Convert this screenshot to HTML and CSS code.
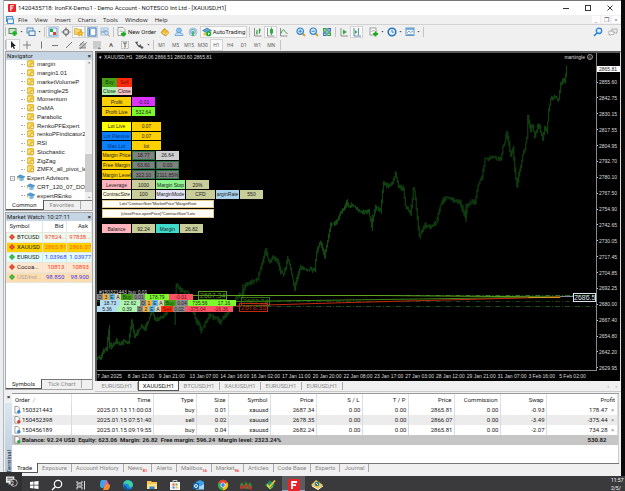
FILE: index.html
```html
<!DOCTYPE html>
<html lang="en">
<head>
<meta charset="utf-8">
<title>Trading terminal</title>
<link rel="stylesheet" href="styles.css">
</head>
<body>
<svg class="sprite" aria-hidden="true">
  <symbol id="i-newchart" viewBox="0 0 10 10"><rect x="1" y="1.5" width="7" height="5" fill="#cfe3cf" stroke="#4f8f58"/><path d="M6.500 4v5M4 6.500h5" stroke="#16b01c" stroke-width="2"/></symbol>
  <symbol id="i-profiles" viewBox="0 0 10 10"><rect x="1" y="1" width="6" height="5" fill="#dbe9f6" stroke="#5c8fbf"/><rect x="3" y="4" width="6" height="4.500" fill="#eaf3fb" stroke="#4a7fb5"/></symbol>
  <symbol id="i-watch" viewBox="0 0 10 10"><rect x="1" y="1" width="8" height="8" fill="#eef5fb" stroke="#5fa0cf"/><rect x="2" y="2" width="3" height="3" fill="#27a844"/><rect x="5" y="5" width="3" height="3" fill="#e0452f"/></symbol>
  <symbol id="i-target" viewBox="0 0 10 10"><circle cx="5" cy="5" r="2.600" fill="none" stroke="#777" stroke-width="1.200"/><path d="M5 .5v3M5 6.500v3M.5 5h3M6.500 5h3" stroke="#777" stroke-width="1.200"/></symbol>
  <symbol id="i-folder" viewBox="0 0 10 10"><path d="M.5 1.500h3l1 1h3v5h-7z" fill="#f6d56b" stroke="#caa12e" stroke-width=".7"/><path d="M6.500 3.500l.9 2 2.100.2-1.600 1.400.5 2.100-1.900-1.100-1.900 1.100.5-2.100-1.600-1.400 2.100-.2z" fill="#ffc421" stroke="#b98a12" stroke-width=".5"/></symbol>
  <symbol id="i-panel" viewBox="0 0 10 10"><rect x="1" y="1" width="8" height="8" fill="#fff" stroke="#3f7fbf" stroke-width="1.200"/><path d="M2 2h1.500v6H2z" fill="#3f7fbf"/></symbol>
  <symbol id="i-tester" viewBox="0 0 10 10"><rect x="1" y="1" width="7" height="7" fill="#dfeaf5" stroke="#8fb2d4" stroke-width=".8"/><path d="M2 6V4M4 6V2.500M6 6V3" stroke="#5a88b5"/><circle cx="6.500" cy="6" r="1.800" fill="#cfe4f5" stroke="#6d94b8" stroke-width=".6"/><path d="M8 7.500l1.500 2" stroke="#c9a13c"/></symbol>
  <symbol id="i-order" viewBox="0 0 10 10"><path d="M1 .5h5l2 2v6H1z" fill="#fff" stroke="#888" stroke-width=".8"/><path d="M2.500 3h3M2.500 4.500h3" stroke="#999" stroke-width=".6"/><path d="M6.500 4.500v5M4 7h5" stroke="#15b11c" stroke-width="2"/></symbol>
  <symbol id="i-diamond" viewBox="0 0 10 10"><path d="M1 5.500L4.500 1.500 9 5.500 5.500 9z" fill="#f2bb2a" stroke="#b07e12" stroke-width=".7"/><path d="M2.500 5.500l3 1.500 3-1.500" stroke="#fff1b8" fill="none" stroke-width=".7"/></symbol>
  <symbol id="i-cloud" viewBox="0 0 10 10"><circle cx="5" cy="3.500" r="2.500" fill="#8cc4ef" stroke="#4a90c8" stroke-width=".6"/><path d="M1 8.500c0-2 1.500-2.700 2.500-2.300 1-1 3-.6 3.300.5C8.500 6.300 9.300 7.500 9 8.500z" fill="#cfe6f8" stroke="#4a90c8" stroke-width=".7"/></symbol>
  <symbol id="i-signal" viewBox="0 0 10 10"><circle cx="5" cy="5" r="4" fill="#c6dfec" stroke="#8fb8cc" stroke-width=".7"/><circle cx="5" cy="4.500" r="2.300" fill="none" stroke="#5d9cc0" stroke-width=".8"/><path d="M5 4v5" stroke="#34a853" stroke-width="1.400"/></symbol>
  <symbol id="i-auto" viewBox="0 0 10 10"><path d="M.5 3.500L5 1l4.500 2.500L5 6z" fill="#5aa3d8" stroke="#2c6d9f" stroke-width=".6"/><path d="M1.500 5.500h5v3h-5z" fill="#e8c34c"/><circle cx="6.700" cy="6.700" r="2.600" fill="#1fae35"/><path d="M6 5.400l2.200 1.300L6 8z" fill="#fff"/></symbol>
  <symbol id="i-bars" viewBox="0 0 10 10"><path d="M1.500 1v8h7" fill="none" stroke="#777" stroke-width=".8"/><path d="M4 3v4.500M4 6H3M6.500 1.500v5M6.500 3H8" stroke="#2e9b43" stroke-width="1.100" fill="none"/></symbol>
  <symbol id="i-candle" viewBox="0 0 10 10"><path d="M1.500 1v8h7" fill="none" stroke="#777" stroke-width=".8"/><path d="M5.500.5v7.500" stroke="#1c8a2e" stroke-width=".8"/><rect x="4" y="2" width="3" height="4.500" fill="#25b53f"/></symbol>
  <symbol id="i-line" viewBox="0 0 10 10"><path d="M1.500 1v8h7" fill="none" stroke="#777" stroke-width=".8"/><path d="M2 6.500C3.500 2 5 2 6 4.500L8.500 7" fill="none" stroke="#2e9b43"/></symbol>
  <symbol id="i-zoomin" viewBox="0 0 10 10"><path d="M6.500 6.500L9 9" stroke="#d7a52f" stroke-width="2"/><circle cx="4.200" cy="4.200" r="3.200" fill="#d9edfb" stroke="#2f80c6" stroke-width="1.200"/><path d="M4.200 2.500v3.400M2.500 4.200h3.400" stroke="#2f80c6"/></symbol>
  <symbol id="i-zoomout" viewBox="0 0 10 10"><path d="M6.500 6.500L9 9" stroke="#d7a52f" stroke-width="2"/><circle cx="4.200" cy="4.200" r="3.200" fill="#d9edfb" stroke="#2f80c6" stroke-width="1.200"/><path d="M2.500 4.200h3.400" stroke="#2f80c6"/></symbol>
  <symbol id="i-tile" viewBox="0 0 10 10"><path d="M1 1h3.700v3.700H1zM5.300 5.300H9V9H5.300z" fill="#2ea53c"/><path d="M5.300 1H9v3.700H5.300zM1 5.300h3.700V9H1z" fill="#3877bf"/><path d="M1.800 3h2M6 3h2M1.800 7.300h2M6 7.300h2" stroke="#dff0ff"/></symbol>
  <symbol id="i-scroll" viewBox="0 0 10 10"><path d="M2 1v8h7" fill="none" stroke="#777" stroke-width=".8"/><path d="M4 2.500L8 5 4 7.500z" fill="#2fae3f"/></symbol>
  <symbol id="i-shift" viewBox="0 0 10 10"><path d="M2 1v8h7M6.500 1v7" fill="none" stroke="#4b7ea8" stroke-width=".9"/><path d="M3 3l2.500 2L3 7z" fill="#2fae3f"/></symbol>
  <symbol id="i-indic" viewBox="0 0 10 10"><rect x="1" y="1" width="6" height="7" fill="#fff" stroke="#888" stroke-width=".8"/><path d="M2.500 5c1-3 2 0 3-2" stroke="#777" fill="none" stroke-width=".7"/><path d="M6.500 4.500v5M4 7h5" stroke="#15b11c" stroke-width="2"/></symbol>
  <symbol id="i-clock" viewBox="0 0 10 10"><circle cx="5" cy="5" r="3.800" fill="#e8f3fc" stroke="#2574bd" stroke-width="1.600"/><path d="M5 3v2.200h1.800" stroke="#2574bd" fill="none" stroke-width=".9"/></symbol>
  <symbol id="i-template" viewBox="0 0 10 10"><rect x="1" y="1" width="8" height="7.500" fill="#f3f9fe" stroke="#5c9acb"/><path d="M1 2h8" stroke="#5c9acb" stroke-width="1.500"/><path d="M2 6l2-2 1.500 1.500L8 4M2 7.500h6" stroke="#4f86b3" fill="none" stroke-width=".7"/></symbol>
  <symbol id="i-find" viewBox="0 0 10 10"><circle cx="6" cy="3.800" r="2.700" fill="#dcefff" stroke="#2c83d6" stroke-width="1.300"/><path d="M4 6L1 9" stroke="#2c83d6" stroke-width="1.600"/></symbol>
  <symbol id="i-chat" viewBox="0 0 12 10"><path d="M4.500 1.500h6.500v4h-1v1.500l-1.500-1.500h-4z" fill="#eee" stroke="#999" stroke-width=".8"/><path d="M1 4h6v4H4L2.500 9.500V8H1z" fill="#f5f5f5" stroke="#999" stroke-width=".8"/></symbol>
  <symbol id="i-cursor" viewBox="0 0 10 10"><path d="M3 1v7l1.700-1.500L5.800 9l1.200-.6L5.900 6H8z" fill="#222"/></symbol>
  <symbol id="i-cross" viewBox="0 0 10 10"><path d="M5 1v8M1 5h8" stroke="#777" stroke-width=".9"/></symbol>
  <symbol id="i-vline" viewBox="0 0 10 10"><path d="M5.500 1.500v7" stroke="#777"/></symbol>
  <symbol id="i-hline" viewBox="0 0 10 10"><path d="M2 5.500h6" stroke="#777"/></symbol>
  <symbol id="i-slope" viewBox="0 0 10 10"><path d="M2 8l6-6" stroke="#777"/></symbol>
  <symbol id="i-channel" viewBox="0 0 10 10"><path d="M1 6l5-5M2 9l7-7M3 3v5M5 2v6M7 3v5M1 8h7" stroke="#666" stroke-width=".7"/></symbol>
  <symbol id="i-fibo" viewBox="0 0 10 10"><path d="M1 2h8M1 4h8M1 6h8M1 8h5" stroke="#888" stroke-width=".7"/><path d="M7 7v2.500M6 8.300h3" stroke="#666" stroke-width=".7"/></symbol>
  <symbol id="i-label" viewBox="0 0 10 10"><rect x="1.500" y="1.500" width="7" height="7" fill="none" stroke="#888" stroke-width=".7" stroke-dasharray="1 .6"/><path d="M3 3h4M5 3v4.500" stroke="#666" stroke-width="1.100"/></symbol>
  <symbol id="i-arrows" viewBox="0 0 10 10"><path d="M1 2l3-.5L3.500 4 5 5.500 6.500 4 8 8 4.500 7 3 5z" fill="#555"/><circle cx="8" cy="7.500" r="1.300" fill="#555"/></symbol>
  <symbol id="i-ind" viewBox="0 0 9 9"><rect x=".5" y=".5" width="7" height="7.500" rx="1" fill="#f4cb37" stroke="#cf9f1d" stroke-width=".7"/><path d="M2 5.500V3M2 3h1.800" stroke="#fff7cf" stroke-width=".9" fill="none"/><circle cx="5.800" cy="5.800" r="1.800" fill="#f9e8a1" stroke="#b8952c" stroke-width=".6"/></symbol>
  <symbol id="i-expert" viewBox="0 0 10 9"><path d="M0 3l4-2.500L10 3 6 5.500z" fill="#4c9fd8" stroke="#23699d" stroke-width=".5"/><path d="M3 4.500v3l3 1 2.500-1.500V4.200L6 5.600z" fill="#7bbbe6"/><path d="M1 3.500v3" stroke="#d8a52b" stroke-width="1.200"/></symbol>
  <symbol id="i-up" viewBox="0 0 6 6"><path d="M3 0l3 3-3 3-3-3z" fill="#2eaa35"/><path d="M3 1.500v3M1.500 3h3" stroke="#a6e7a6" stroke-width=".3"/></symbol>
  <symbol id="i-down" viewBox="0 0 6 6"><path d="M3 0l3 3-3 3-3-3z" fill="#dc3a1e"/><path d="M3 1.500v3M1.500 3h3" stroke="#ffb09e" stroke-width=".3"/></symbol>
  <symbol id="i-deal" viewBox="0 0 8 9"><path d="M1 .5h3.500l1.500 1.500v6H1z" fill="#fff" stroke="#777" stroke-width=".8"/><circle cx="5.500" cy="6.500" r="2" fill="currentColor"/></symbol>
</svg>

<div class="screen">
  <div class="edge edge-left"></div>
  <main class="window">
    <header class="titlebar">
      <svg class="logo" viewBox="0 0 9 9"><rect width="9" height="9" rx="1" fill="#e8242a"/><path d="M3.200 7.500V2h3.300M3.200 4.500h2.600" stroke="#fff" stroke-width="1.300" fill="none"/></svg>
      <h1>1420435718: IronFX-Demo1 - Demo Account - NOTESCO Int Ltd - [XAUUSD,H1]</h1>
      <div class="winctl">
        <button aria-label="Minimize"><svg viewBox="0 0 8 8"><path d="M1 4.500h6" stroke="#333"/></svg></button>
        <button aria-label="Maximize"><svg viewBox="0 0 8 8"><rect x="1.500" y="1.500" width="5" height="5" fill="none" stroke="#333"/></svg></button>
        <button aria-label="Close"><svg viewBox="0 0 8 8"><path d="M1.500 1.500l5 5M6.500 1.500l-5 5" stroke="#333"/></svg></button>
      </div>
    </header>

    <nav class="menubar">
      <svg class="menuicon" viewBox="0 0 8 8"><rect x=".5" y=".5" width="6" height="5" fill="#cfe5f7" stroke="#4a8fc7"/><rect x="1.500" y="3" width="6" height="4.500" fill="#e8f4fd" stroke="#4a8fc7"/></svg>
      <button>File</button><button>View</button><button>Insert</button><button>Charts</button><button>Tools</button><button>Window</button><button>Help</button>
      <div class="mdictl"><button aria-label="Minimize chart">_</button><button aria-label="Restore chart">❐</button><button aria-label="Close chart">×</button></div>
    </nav>

    <div class="toolbar">
      <i class="grip"></i>
      <button aria-label="New chart"><svg><use href="#i-newchart"/></svg></button><i class="caret"></i>
      <button aria-label="Profiles"><svg><use href="#i-profiles"/></svg></button><i class="caret"></i>
      <i class="sep"></i>
      <button class="on" aria-label="Market Watch"><svg><use href="#i-watch"/></svg></button>
      <button aria-label="Data Window"><svg><use href="#i-target"/></svg></button>
      <button class="on" aria-label="Navigator"><svg><use href="#i-folder"/></svg></button>
      <button class="on" aria-label="Terminal"><svg><use href="#i-panel"/></svg></button>
      <button aria-label="Strategy Tester"><svg><use href="#i-tester"/></svg></button>
      <i class="sep"></i>
      <button class="wide order"><svg><use href="#i-order"/></svg>New Order</button>
      <button class="mid" aria-label="MetaEditor"><svg><use href="#i-diamond"/></svg></button>
      <button class="mid" aria-label="Market"><svg><use href="#i-cloud"/></svg></button>
      <button class="mid" aria-label="Signals"><svg><use href="#i-signal"/></svg></button>
      <button class="wide on auto"><svg><use href="#i-auto"/></svg>AutoTrading</button>
      <i class="sep"></i>
      <button aria-label="Bar chart"><svg><use href="#i-bars"/></svg></button>
      <button class="on" aria-label="Candlesticks"><svg><use href="#i-candle"/></svg></button>
      <button aria-label="Line chart"><svg><use href="#i-line"/></svg></button>
      <i class="gap"></i>
      <button aria-label="Zoom in"><svg><use href="#i-zoomin"/></svg></button>
      <button aria-label="Zoom out"><svg><use href="#i-zoomout"/></svg></button>
      <button aria-label="Tile windows"><svg><use href="#i-tile"/></svg></button>
      <i class="sep"></i>
      <button aria-label="Auto scroll"><svg><use href="#i-scroll"/></svg></button>
      <button class="on" aria-label="Chart shift"><svg><use href="#i-shift"/></svg></button>
      <i class="gap"></i>
      <button aria-label="Indicators"><svg><use href="#i-indic"/></svg></button><i class="caret"></i>
      <button aria-label="Periods"><svg><use href="#i-clock"/></svg></button><i class="caret"></i>
      <button aria-label="Templates"><svg><use href="#i-template"/></svg></button><i class="caret"></i>
      <i class="sep"></i>
      <span class="right">
        <button aria-label="Search"><svg><use href="#i-find"/></svg></button>
        <button aria-label="Chat"><svg><use href="#i-chat"/></svg></button>
      </span>
    </div>

    <div class="toolbar tools">
      <i class="grip"></i>
      <button class="on" aria-label="Cursor"><svg><use href="#i-cursor"/></svg></button>
      <button aria-label="Crosshair"><svg><use href="#i-cross"/></svg></button>
      <button aria-label="Vertical line"><svg><use href="#i-vline"/></svg></button>
      <button aria-label="Horizontal line"><svg><use href="#i-hline"/></svg></button>
      <button aria-label="Trendline"><svg><use href="#i-slope"/></svg></button>
      <button aria-label="Channel"><svg><use href="#i-channel"/></svg></button>
      <button aria-label="Fibonacci"><svg><use href="#i-fibo"/></svg></button>
      <button class="letter">A</button>
      <button aria-label="Label"><svg><use href="#i-label"/></svg></button>
      <button aria-label="Arrows"><svg><use href="#i-arrows"/></svg></button><i class="caret"></i>
      <i class="sep"></i>
      <span class="frames"><button class="tf">M1</button><button class="tf">M5</button><button class="tf">M15</button><button class="tf">M30</button><button class="tf on">H1</button><button class="tf">H4</button><button class="tf">D1</button><button class="tf">W1</button><button class="tf">MN</button></span>
      <i class="sep"></i>
    </div>

    <div class="work">
      <aside class="side">
        <section class="panel navigator">
          <h2>Navigator<button aria-label="Close Navigator">×</button></h2>
          <div class="treebox">
            <ul class="tree">
              <li><svg><use href="#i-ind"/></svg>margin</li>
              <li><svg><use href="#i-ind"/></svg>margin1.01</li>
              <li><svg><use href="#i-ind"/></svg>marketVolumeP</li>
              <li><svg><use href="#i-ind"/></svg>martingle25</li>
              <li><svg><use href="#i-ind"/></svg>Momentum</li>
              <li><svg><use href="#i-ind"/></svg>OsMA</li>
              <li><svg><use href="#i-ind"/></svg>Parabolic</li>
              <li><svg><use href="#i-ind"/></svg>RenkoPFExpert</li>
              <li><svg><use href="#i-ind"/></svg>renkoPFindicator2</li>
              <li><svg><use href="#i-ind"/></svg>RSI</li>
              <li><svg><use href="#i-ind"/></svg>Stochastic</li>
              <li><svg><use href="#i-ind"/></svg>ZigZag</li>
              <li><svg><use href="#i-ind"/></svg>ZMFX_all_pivot_le</li>
              <li class="root"><span class="toggle">−</span><svg><use href="#i-expert"/></svg>Expert Advisors</li>
              <li><svg><use href="#i-expert"/></svg>CRT_120_07_DOW</li>
              <li><svg><use href="#i-expert"/></svg>expertREnko</li>
            </ul>
            <div class="scroll"><span>⌃</span><b></b><span>⌄</span></div>
          </div>
          <div class="tabs"><button class="active">Common</button><button>Favorites</button></div>
        </section>

        <section class="panel watch">
          <h2>Market Watch: 10:27:11<button aria-label="Close Market Watch">×</button></h2>
          <div class="watchbody">
            <table>
              <thead><tr><th>Symbol</th><th>Bid</th><th>Ask</th></tr></thead>
              <tbody>
                <tr class="r-mint"><td><svg><use href="#i-down"/></svg>BTCUSD</td><td class="dn">97824...</td><td class="dn">97838...</td></tr>
                <tr class="r-gold"><td><svg><use href="#i-down"/></svg>XAUUSD</td><td class="dn">2865.81</td><td class="dn">2866.07</td></tr>
                <tr class="r-cyan"><td><svg><use href="#i-up"/></svg>EURUSD</td><td class="up">1.03968</td><td class="up">1.03977</td></tr>
                <tr class="r-peach"><td><svg><use href="#i-down"/></svg>Cocoa...</td><td class="dn">10813</td><td class="dn">10893</td></tr>
                <tr class="r-sand"><td class="dim"><svg><use href="#i-up"/></svg>USDInd...</td><td class="up">98.850</td><td class="up">98.900</td></tr>
              </tbody>
            </table>
          </div>
          <div class="tabs"><button class="active">Symbols</button><button>Tick Chart</button></div>
        </section>
      </aside>

      <section class="mdi">
        <div class="chart">
          <div class="plot">
            <svg class="canvas" viewBox="97 54 501 317" preserveAspectRatio="none">
              <path id="price" fill="none" stroke="#144c14" stroke-width="1"/>
              <g fill="none" stroke-width="1">
                <path d="M97 296.500H598" stroke="#2b702b" stroke-dasharray="5 2 1 2"/>
                <path d="M97 302.500H598" stroke="#174217" stroke-dasharray="5 2 1 2"/>
                <path d="M97 307.500H598" stroke="#1d4f1d" stroke-dasharray="5 2 1 2"/>
                <path d="M193 296.500H382L562 298" stroke="#5fa51c"/>
                <path d="M236 302.500L420 300 562 298" stroke="#3d8a14"/>
                <path d="M234 307L350 303.500 562 298" stroke="#c82a12"/>
                <path d="M530 298.500H562" stroke="#d9901c"/>
                <path d="M562 297.500H576" stroke="#889"/>
              </g>
            </svg>
            <div class="caption"><span class="tri">▾</span>XAUUSD,H1&nbsp; 2864.06 2866.51 2863.60 2865.81<span class="ea">martingle <svg viewBox="0 0 6 6"><circle cx="3" cy="3" r="2.500" fill="none" stroke="#ddd" stroke-width=".7"/><path d="M1.800 3.500c.6 1 1.800 1 2.400 0M2 2.200h.6M3.400 2.200h.6" fill="none" stroke="#ddd" stroke-width=".6"/></svg></span></div>

            <div class="info">
              <div class="block b1">
                <div class="line"><button class="c15 buy">Buy</button><button class="c15 sell">Sell</button></div>
                <div class="line"><button class="c15 cbuy">Close</button><button class="c15 csell">Close</button></div>
              </div>
              <div class="block b2">
                <div class="line"><span class="c29 gold">Profit</span><span class="c24 violet">-0.01</span></div>
                <div class="line"><span class="c29 gold">Profit Live</span><span class="c24 lime">532.64</span></div>
              </div>
              <div class="block b3">
                <div class="line"><span class="c29 yellow">Lot Live</span><span class="c29 gold">0.07</span></div>
                <div class="line"><span class="c29 blue">Lot Passive</span><span class="c29 gold">0.07</span></div>
                <div class="line"><span class="c29 blue">Max Lot</span><span class="c29 gold">lot</span></div>
                <div class="line"><span class="c29 gold">Margin Price</span><span class="c24 gray">18.77</span><span class="c24 silver">26.64</span></div>
                <div class="line"><span class="c29 gold">Free Margin</span><span class="c24 gray">63.60</span><span class="c24 gray">0.00</span></div>
                <div class="line"><span class="c29 gold">Margin Level</span><span class="c24 gray">322.10</span><span class="c24 gray">2111.85%</span></div>
                <div class="line"><span class="c29 pink">Leverage</span><span class="c24 olive">1000</span><span class="c29 mint">Margin Stop</span><span class="c24 olive">20%</span></div>
                <div class="line"><span class="c29 cream">ContracSize</span><span class="c24 olive">100</span><span class="c29 lav">MarginMode</span><span class="c29 olive">CFD</span><span class="c24 sky">arginRate</span><span class="c24 olive">550</span></div>
                <div class="line"><span class="c110 white">Lots*ContractSize*MarketPrice*MarginRate</span></div>
                <div class="line"><span class="c110 white">(closePrice-openPrice)*ContractSize*Lots</span></div>
              </div>
              <div class="block b4">
                <div class="line"><span class="c29 pink">Balance</span><span class="c24 olive">92.24</span><span class="c24 teal">Margin</span><span class="c24 olive">26.82</span></div>
              </div>
            </div>

            <div class="deals">
              <p>#150321443 buy 0.01</p>
              <div class="deal"><i class="k g">D</i><i class="k o">3</i><i class="k b">E</i><i class="k t">A</i><i class="m buy">Buy</i><i class="m g">0.01</i><i class="w lime">178.79</i><i class="w red">-0.01</i></div>
              <div class="deal in"><i class="v ice">18.73</i><i class="v leaf">22.62</i><i class="k g">D</i><i class="k o">1</i><i class="k b">E</i><i class="k t">A</i><i class="m buy">Buy</i><i class="m g">0.04</i><i class="w lime">735.56</i><i class="w lime">17.16</i></div>
              <div class="deal"><i class="v ice">5.36</i><i class="v leaf">0.39</i><i class="k g">D</i><i class="k o">2</i><i class="k b">E</i><i class="k t">A</i><i class="m sell">Sell</i><i class="m g">0.02</i><i class="w red">-375.04</i><i class="w red">-16.36</i></div>
            </div>
            <span class="mark m1">2687.34</span>
            <span class="mark m2">2682.24</span>
            <span class="mark m3">2678.35</span>
            <span class="mark m4">2686.5</span>
          </div>
          <div class="prices">
            <b>2865.81</b>
            <div class="scale"><span>2855.60</span><span>2842.75</span><span>2830.15</span><span>2817.55</span><span>2804.95</span><span>2792.70</span><span>2780.10</span><span>2767.50</span><span>2754.90</span><span>2742.65</span><span>2730.05</span><span>2717.45</span><span>2704.85</span><span>2692.25</span><span>2680.00</span><span>2667.40</span><span>2654.80</span><span>2642.20</span><span>2629.95</span></div>
          </div>
          <div class="times"><span>7 Jan 2025</span><span>8 Jan 12:00</span><span>9 Jan 21:00</span><span>13 Jan 07:00</span><span>14 Jan 16:00</span><span>16 Jan 02:00</span><span>17 Jan 11:00</span><span>20 Jan 20:00</span><span>22 Jan 08:00</span><span>23 Jan 17:00</span><span>27 Jan 03:00</span><span>28 Jan 12:00</span><span>29 Jan 21:00</span><span>31 Jan 07:00</span><span>3 Feb 16:00</span><span>5 Feb 02:00</span></div>
        </div>
        <div class="charttabs"><button>EURUSD,H1</button><button class="active">XAUUSD,H1</button><button>BTCUSD,H1</button><button>XAUUSD,H1</button><button>EURUSD,H1</button><button>EURUSD,H1</button><span class="nav">‹&emsp;›</span></div>
      </section>
    </div>

    <section class="terminal">
      <div class="spine"><button aria-label="Close Terminal">×</button><span>Terminal</span></div>
      <div class="tmain">
        <div class="tbody">
          <table>
            <colgroup><col class="k59"><col class="k82"><col class="k43"><col class="k32"><col class="k42"><col class="k46"><col class="k46"><col class="k46"><col class="k46"><col class="k46"><col class="k46"><col></colgroup>
            <thead><tr><th>Order &nbsp;<em>/</em></th><th>Time</th><th>Type</th><th>Size</th><th>Symbol</th><th>Price</th><th>S / L</th><th>T / P</th><th>Price</th><th>Commission</th><th>Swap</th><th>Profit</th></tr></thead>
            <tbody>
              <tr><td><svg class="b"><use href="#i-deal"/></svg>150321443</td><td>2025.01.13 11:00:03</td><td>buy</td><td>0.01</td><td>xauusd</td><td>2687.34</td><td>0.00</td><td>0.00</td><td>2865.81</td><td>0.00</td><td>-0.93</td><td>178.47 <button aria-label="Close order">×</button></td></tr>
              <tr><td><svg class="s"><use href="#i-deal"/></svg>150452398</td><td>2025.01.15 07:51:40</td><td>sell</td><td>0.02</td><td>xauusd</td><td>2678.35</td><td>0.00</td><td>0.00</td><td>2866.07</td><td>0.00</td><td>-3.49</td><td>-375.44 <button aria-label="Close order">×</button></td></tr>
              <tr><td><svg class="b"><use href="#i-deal"/></svg>150456189</td><td>2025.01.15 09:19:55</td><td>buy</td><td>0.04</td><td>xauusd</td><td>2682.24</td><td>0.00</td><td>0.00</td><td>2865.81</td><td>0.00</td><td>-2.07</td><td>734.28 <button aria-label="Close order">×</button></td></tr>
            </tbody>
            <tfoot><tr><td colspan="11"><svg class="ok"><use href="#i-deal"/></svg>Balance: 92.24 USD&nbsp; Equity: 623.06&nbsp; Margin: 26.82&nbsp; Free margin: 596.24&nbsp; Margin level: 2323.24%</td><td>530.82</td></tr></tfoot>
          </table>
        </div>
        <div class="tabs"><button class="active">Trade</button><button>Exposure</button><button>Account History</button><button>News<sub>81</sub></button><button>Alerts</button><button>Mailbox<sub>14</sub></button><button>Market<sub>96</sub></button><button>Articles</button><button>Code Base</button><button>Experts</button><button>Journal</button></div>
      </div>
    </section>
  </main>
  <div class="edge edge-right"></div>
</div>

<footer class="taskbar">
  <div class="apps">
  <button aria-label="Start"><svg viewBox="0 0 12 12"><path d="M2 3l3.500-.5v3.200H2zM6.200 2.400L10.500 2v3.700H6.200zM2 6.400h3.500v3.200L2 9zM6.200 6.400h4.300V10l-4.300-.5z" fill="#fff"/></svg></button>
  <button aria-label="Search"><svg viewBox="0 0 12 12"><circle cx="7" cy="5" r="3.700" fill="none" stroke="#fff" stroke-width="1.200"/><path d="M4.300 7.700L1 11" stroke="#fff" stroke-width="1.300"/></svg></button>
  <button aria-label="Task view"><svg viewBox="0 0 12 12"><path d="M2 2v2h5V2M2 10.500V8h5v2.500M9.500 2v8.500" fill="none" stroke="#ddd"/><path d="M2 5h5v2H2z" fill="none" stroke="#ddd" stroke-width=".8"/></svg></button>
  <button aria-label="Copilot"><svg viewBox="0 0 12 12"><path d="M3 1h4c2 0 1.500 3 3 4 2 1-1 3-2 3H5z" fill="#e85fa5"/><path d="M3 1h4L5 8c-.5 2-4 1-4-1 0-3 .5-6 2-6z" fill="#39a6e8"/><path d="M5 8l2-3 4 1c0 3-1 5-3 5H4z" fill="#f28c34"/></svg></button>
  <button aria-label="Edge"><svg viewBox="0 0 12 12"><circle cx="6" cy="6" r="5" fill="#1b84d8"/><path d="M1.200 5A5 5 0 0 1 11 6c0 2-2 2.500-4 2 1-3-3-4-5.800-3z" fill="#3fd0a0"/><path d="M4 7c0 2 2 3.500 5 3-2 2-7 .5-7-3z" fill="#0c4f9e"/></svg></button>
  <button aria-label="Explorer"><svg viewBox="0 0 12 12"><path d="M1 2h4l1 1h5v7H1z" fill="#f7c64a"/><path d="M1 5h10v5H1z" fill="#fde08a"/><path d="M3.500 10V7.500h5V10" fill="#2f86d2"/></svg></button>
  <button aria-label="Store"><svg viewBox="0 0 12 12"><path d="M4 3V1.500h4V3" fill="none" stroke="#ccc"/><rect x="1" y="3" width="10" height="8" fill="#f4f4f4"/><path d="M3.500 4.500h2v2h-2z" fill="#e8502d"/><path d="M6.500 4.500h2v2h-2z" fill="#6fb52c"/><path d="M3.500 7.500h2v2h-2z" fill="#2f8fe0"/><path d="M6.500 7.500h2v2h-2z" fill="#f5b522"/></svg></button>
  <button aria-label="Outlook"><svg viewBox="0 0 12 12"><path d="M3 3l4-2 4 2v7H3z" fill="#3aa0e8"/><path d="M3 5l4 2.500L11 5v5.500H3z" fill="#9fd6fa"/><rect y="4" width="6" height="6" rx=".7" fill="#1066b5"/><circle cx="3" cy="7" r="1.500" fill="none" stroke="#fff"/></svg></button>
  <button aria-label="Chrome"><svg viewBox="0 0 12 12"><circle cx="6" cy="6" r="5.200" fill="#35a853"/><path d="M6 6L1.500 3.400A5.200 5.200 0 0 1 10.500 3.400z" fill="#e94335"/><path d="M6 6l4.500-2.600A5.200 5.200 0 0 1 6 11.200z" fill="#fbbc05"/><circle cx="6" cy="6" r="2.500" fill="#fff"/><circle cx="6" cy="6" r="1.900" fill="#4285f4"/></svg></button>
  <button aria-label="Market app"><svg viewBox="0 0 12 12"><path d="M0 9V6l2-3 2 4 2-5 2 5 2-4 2 4v2L9 10z" fill="#159a38"/><path d="M1 10V7l1.500 2L4 6l1.500 3L8 5l1 4 2-1v3" fill="none" stroke="#d3262f" stroke-width="1.300"/></svg></button>
  <button aria-label="Editor"><svg viewBox="0 0 12 12"><path d="M1 6l5-4.500L11 6l-5 4.500z" fill="#1d8f62"/><path d="M3 5.500l2.500 2.500L11 1.500" fill="none" stroke="#f0c83c" stroke-width="1.700"/><path d="M3 7l3 3 3-2.500" fill="none" stroke="#9ad63e"/></svg></button>
  <button class="current" aria-label="IronFX"><svg viewBox="0 0 12 12"><rect width="12" height="12" rx="1" fill="#e8242a"/><path d="M4 10V3h5M4 6.200h4" stroke="#fff" stroke-width="1.800" fill="none"/></svg></button>
  <button aria-label="MetaEditor"><svg viewBox="0 0 12 12"><path d="M0 6l5-5 7 5-5 5z" fill="#e9c765"/><path d="M1 7l6 3.500L12 7" fill="none" stroke="#fff4cc"/><circle cx="6" cy="5" r="2.300" fill="#2c7a84"/><path d="M5 4l2 2" stroke="#d6f5e8"/></svg></button>
  </div>
  <time>11:57<br>2/5/</time>
  <button class="notice" aria-label="Notifications"><svg viewBox="0 0 14 13"><path d="M1 1.500h9v7H6L4 11V8.500H1z" fill="#eee"/><path d="M2.500 3.500h6M2.500 5.500h4" stroke="#555"/><circle cx="9.500" cy="8.500" r="3.800" fill="#333" stroke="#ddd" stroke-width=".8"/></svg><span>2</span></button>
</footer>
<script src="chart.js"></script>
</body>
</html>
```
FILE: chart.js
```js
(function () {
  // Price turning points: x, y in the canvas's own units.
  var points = [
    97,358, 101,359, 104,352, 107,350, 109,331, 110,345, 112,348, 117,342, 121,346, 124,342, 129,344, 131,330, 132,322, 135,338,
    139,331, 142,328, 146,329, 149,322, 152,312, 156,320, 162,318, 165,316, 169,311, 173,305, 175,308, 177,286, 180,290, 184,293,
    188,293, 191,299, 194,312, 197,322, 200,326, 202,332, 205,326, 207,322, 211,316, 216,319, 218,318, 221,325, 224,318, 228,315,
    232,309, 235,304, 238,298, 241,296, 243,297, 246,287, 251,284, 255,282, 259,280, 261,272, 263,266, 265,258, 267,251,
    269,259, 271,263, 274,259, 276,260, 279,263, 282,273, 285,275, 287,268, 289,260, 291,265, 293,275, 296,290, 298,280,
    302,268, 307,271, 311,270, 316,272, 318,252, 322,243, 324,250, 326,257, 329,243, 332,226, 338,223, 342,214, 345,210,
    347,207, 348,202, 350,208, 353,206, 358,209, 362,213, 370,213, 373,226, 377,208, 382,212, 385,184, 388,187, 392,186,
    395,181, 397,174, 400,187, 405,190, 407,206, 412,215, 415,191, 416,192, 418,210, 420,229, 421,238, 424,231, 427,226, 433,228,
    438,224, 440,215, 442,207, 446,200, 450,198, 457,202, 462,203, 465,212, 467,218, 469,207, 473,203, 477,203, 480,186,
    484,178, 487,160, 492,159, 497,158, 503,161, 505,148, 507,143, 509,133, 511,145, 513,157, 515,149, 517,171, 519,187,
    521,175, 523,167, 525,155, 527,150, 529,138, 530,118, 533,132, 535,126, 537,138, 540,127, 542,128, 545,140, 547,129,
    549,133, 551,112, 553,99, 557,98, 561,101, 563,86, 566,80, 567,82, 569,69
  ];
  var seed = 7;
  function rand() {
    seed = (seed * 16807) % 2147483647;
    return seed / 2147483647;
  }
  var d = "";
  for (var i = 0; i + 3 < points.length; i += 2) {
    var x0 = points[i], y0 = points[i + 1], x1 = points[i + 2], y1 = points[i + 3];
    for (var x = x0; x < x1; x++) {
      var a = y0 + (y1 - y0) * (x - x0) / (x1 - x0);
      var b = y0 + (y1 - y0) * (x + 1 - x0) / (x1 - x0);
      var high = Math.min(a, b) - rand() * 3;
      var low = Math.max(a, b) + rand() * 3;
      d += "M" + (x + 0.5) + " " + high.toFixed(1) + "V" + low.toFixed(1);
    }
  }
  // Long single wicks.
  d += "M175.5 300V326M243.5 285V300M373.5 215V232M467.5 205V223M109.5 326V350";
  document.getElementById("price").setAttribute("d", d);
})();
```
FILE: styles.css
```css
* { box-sizing: border-box; }
html, body { margin: 0; height: 100%; }
body {
  display: flex; flex-direction: column; overflow: hidden;
  background: #000; color: #222;
  font-family: Roboto, "Noto Sans", sans-serif; font-size: 6px; line-height: 8px;
}
.sprite { position: absolute; width: 0; height: 0; }
button { margin: 0; padding: 0; border: 0; background: none; color: inherit; font: inherit; white-space: nowrap; }
h1, h2, p, ul { margin: 0; padding: 0; font-weight: 400; font-size: inherit; list-style: none; }
i { font-style: normal; }
table { border-collapse: collapse; table-layout: fixed; width: 100%; }

.screen { flex: 1; min-height: 0; display: flex; }
.edge { width: 4px; }
.edge-left { background: #e9edf0; border-right: 1px solid #b5b8ba; }
.edge-right { background: #0a0a0a; }
.window { flex: 1; min-width: 0; display: flex; flex-direction: column; background: #f0f0f0; border-top: 1px solid #777; }

.titlebar { display: flex; align-items: center; height: 14px; padding-left: 4px; background: #fff; }
.logo { width: 8px; height: 8px; margin-right: 2px; }
.titlebar h1 { color: #222; white-space: nowrap; }
.winctl { display: flex; gap: 14px; margin-left: auto; padding-right: 7px; }
.winctl button { width: 8px; height: 8px; }
.winctl svg { display: block; width: 8px; height: 8px; }

.menubar { display: flex; align-items: center; gap: 7px; height: 10px; padding-left: 2px; border-bottom: 1px solid #d2d2d2; font-family: "Open Sans", sans-serif; }
.menuicon { width: 8px; height: 8px; margin-right: -3px; }
.mdictl { display: flex; gap: 2px; margin-left: auto; padding-right: 1px; }
.mdictl button { width: 8px; height: 7px; background: #fff; color: #557; line-height: 6px; }

.toolbar { display: flex; align-items: center; height: 13px; }
.toolbar button { width: 13px; height: 12px; display: flex; align-items: center; justify-content: center; flex: none; }
.toolbar button.on { background: #fafafa; border: 1px solid #d3d3d3; }
.toolbar svg { width: 10px; height: 10px; flex: none; }
.toolbar .mid, .tools button { width: 14px; }
.toolbar .wide { gap: 1px; }
.toolbar .order { width: 43px; }
.toolbar .auto { width: 47px; }
.toolbar .letter { font-weight: 700; color: #666; }
.frames { display: grid; grid-template-columns: repeat(9, 1fr); width: 123px; }
.toolbar .tf { color: #666; font-size: 5px; width: auto; }
.grip { width: 2px; height: 9px; border-right: 1px solid #bbb; }
.sep { width: 3px; height: 10px; border-right: 1px solid #c4c4c4; margin-right: 1px; }
.gap { width: 4px; }
.caret { width: 5px; height: 2px; background: #555; clip-path: polygon(20% 0, 80% 0, 50% 100%); }
.right { display: flex; gap: 2px; margin-left: auto; padding-right: 2px; }

.work { flex: 1; min-height: 0; display: flex; }
.side { width: 91px; display: flex; flex-direction: column; padding: 0 2px 2px 1px; gap: 1px; }
.panel { display: flex; flex-direction: column; border: 1px solid #a9a9a9; min-height: 0; }
.panel h2 { display: flex; justify-content: space-between; height: 8px; padding: 0 1px; background: #c6d5e3; line-height: 7px; white-space: nowrap; }
.panel h2 button { line-height: 6px; font-weight: 700; }
.navigator { height: 160px; }
.treebox { flex: 1; min-height: 0; display: flex; background: #fff; }
.tree { flex: 1; min-width: 0; overflow: hidden; display: grid; grid-auto-rows: 1fr; padding-left: 15px; font-family: "Liberation Sans", sans-serif; }
.tree li { display: flex; align-items: center; gap: 2px; white-space: nowrap; line-height: 8px; }
.tree li::before { content: ""; width: 4px; border-top: 1px dotted #aaa; }
.tree svg { width: 8px; height: 8px; flex: none; }
.tree .root { margin-left: -11px; }
.tree .root::before { display: none; }
.toggle { width: 5px; height: 5px; border: 1px solid #aaa; line-height: 3px; font-size: 4px; text-align: center; }
.scroll { width: 7px; display: flex; flex-direction: column; align-items: center; background: #f0f0f0; font-size: 5px; }
.scroll b { width: 7px; height: 38px; margin-top: auto; background: #cdcdcd; }

.tabs { display: flex; height: 10px; border-top: 1px solid #777; color: #8a8a8a; background: #f0f0f0; }
.tabs button { padding: 0 6px; border-right: 1px solid #aaa; height: 8px; line-height: 8px; }
.tabs .active { height: 10px; margin-top: -1px; background: #fff; color: #222; border-right: 1px solid #555; border-bottom: 1px solid #555; }
.watch { flex: 1; }
.watchbody { flex: 1; background: #fff; }
.watch th { height: 11px; padding: 0 3px; font-weight: 400; text-align: right; border-right: 1px solid #e4e4e4; }
.watch th:first-child { text-align: left; width: 42%; }
.watch td { height: 10px; padding: 0 2px; text-align: right; white-space: nowrap; border: 1px solid #e6e6dd; line-height: 8px; }
.watch td:first-child { text-align: left; }
.watch td svg { width: 6px; height: 6px; margin-right: 2px; vertical-align: -1px; }
.watch .r-mint { background: #effaef; } .watch .r-gold { background: #ffd000; } .watch .r-cyan { background: #e0fdff; }
.watch .r-peach { background: #ffe6cf; } .watch .r-sand { background: #ffdcae; }
.up { color: #3a3af0; } .dn { color: #fa3c2c; } .dim { color: #aaa59a; }
.r-gold .dn { color: #f26a00; }

.mdi { flex: 1; min-width: 0; display: flex; flex-direction: column; }
.chart {
  flex: 1; min-height: 0; display: grid; grid-template: 1fr 10px / 1fr 23px;
  background: #000; color: #ddd; border: 2px solid #5a5a5a; border-right: 1px solid #ddd; border-bottom: 0;
  font-family: "Liberation Sans", sans-serif; font-size: 5px; line-height: 6px;
}
.plot { position: relative; min-width: 0; border-right: 1px solid #888; border-bottom: 1px solid #888; overflow: hidden; }
.canvas { position: absolute; inset: 0; width: 100%; height: 100%; }
.caption { position: relative; display: flex; padding: 1px 3px 0 2px; height: 8px; white-space: nowrap; }
.tri { width: 5px; }
.ea { display: flex; gap: 2px; margin-left: auto; }
.ea svg { width: 6px; height: 6px; }
.info { position: relative; width: 160px; padding-left: 5px; color: #222; }
.block { display: grid; grid-auto-rows: 1fr; row-gap: 1px; }
.b1 { margin-top: 17px; height: 17px; row-gap: 0; }
.b2 { margin-top: 2px; height: 19px; }
.b3 { margin-top: 6px; height: 96px; }
.b4 { margin-top: 6px; height: 9px; }
.line { display: flex; gap: 1px; }
.b1 .line { gap: 0; }
.line > * { display: flex; align-items: center; justify-content: center; overflow: hidden; white-space: nowrap; }
.c15 { width: 15px; } .c24 { width: 23px; } .c29 { width: 29px; } .c110 { width: 112px; font-size: 4px; }
.buy { background: #46a018; color: #10400a; } .sell { background: #ff2a0e; color: #6e0a00; }
.cbuy { background: #aef2ae; } .csell { background: #f9c0c6; }
.gold { background: #ffd000; } .yellow { background: #ffff00; } .blue { background: #0a80ff; color: #04356e; }
.violet { background: #d935ff; } .lime { background: #7cfc2c; } .gray { background: #808080; border: 1px solid #2c7a4c; }
.silver { background: #d0d0d0; } .pink { background: #ffb3bd; } .olive { background: #c8cd9a; } .mint { background: #8ff58f; }
.cream { background: #fffbe0; } .lav { background: #e4e4f8; } .sky { background: #a9d3ec; } .teal { background: #3fdccb; }
.white { background: #fffdf5; border: 1px solid #e0c98a; }

.deals { position: absolute; left: 0; top: 237px; color: #222; }
.deals p { padding-left: 2px; color: #ddd; line-height: 4px; }
.deal { display: flex; height: 6px; line-height: 6px; }
.deal.in { padding-left: 3px; }
.deal i { text-align: center; overflow: hidden; }
.deal .k { width: 6px; } .deal .m { width: 12px; } .deal .v { width: 20px; } .deal .w { width: 24px; }
.deal .g { background: #8b8b8b; } .deal .o { background: #f0b040; } .deal .b { background: #62baf0; } .deal .t { background: #d6d3a8; }
.ice { background: #b4dcf2; } .leaf { background: #aef5b0; } .red { background: #fb5266; color: #611; }
.mark { position: absolute; height: 9px; padding: 0 1px; border: 1px solid; font-size: 7px; line-height: 8px; white-space: nowrap; overflow: hidden; }
.m1 { left: 101px; top: 238px; color: #559a1d; }
.m2 { left: 144px; top: 244px; color: #2f7414; }
.m3 { left: 142px; top: 250px; color: #c22a14; }
.m4 { right: 0; top: 240px; color: #dce4ee; width: 23px; padding: 0; }

.prices { position: relative; display: flex; flex-direction: column; }
.prices b { margin-top: 13px; padding-left: 2px; height: 6px; background: #fff; color: #222; font-weight: 400; }
.scale { flex: 1; display: flex; flex-direction: column; justify-content: space-between; padding-top: 7px; }
.scale span { display: flex; align-items: center; gap: 1px; height: 6px; }
.scale span::before { content: ""; width: 1px; height: 1px; background: #ccc; }
.times { grid-column: 1 / 3; display: grid; grid-template-columns: repeat(16, 1fr); padding: 2px 30px 0 0; white-space: nowrap; }

.charttabs { display: flex; align-items: center; height: 11px; padding-left: 2px; background: #f0f0f0; color: #8a8a8a; border-bottom: 1px solid #c9c9c9; }
.charttabs button { width: 41px; height: 8px; border-right: 1px solid #aaa; line-height: 8px; }
.charttabs .active { height: 10px; background: #fff; color: #222; border: 1px solid #555; border-top: 0; }
.nav { margin-left: auto; padding-right: 4px; }

.terminal { height: 84px; display: flex; padding: 1px 2px 3px 1px; }
.spine { width: 7px; display: flex; flex-direction: column; justify-content: space-between; align-items: center; background: linear-gradient(#f0f0f0 10px, #dce6ef 10px, #b4c8dc); }
.spine span { writing-mode: vertical-rl; transform: rotate(180deg); line-height: 7px; }
.spine button { font-weight: 700; }
.tmain { flex: 1; min-width: 0; display: flex; flex-direction: column; border-top: 1px solid #999; }
.tbody { flex: 1; min-height: 0; background: #fff; border-right: 1px solid #ccc; }
.terminal th { height: 11px; padding: 0 2px 0 3px; font-weight: 400; text-align: right; border-right: 1px solid #e2e2e2; white-space: nowrap; }
.terminal td { height: 10px; padding: 0 1px 0 2px; text-align: right; border-right: 1px solid #dcdcdc; line-height: 8px; white-space: nowrap; }
.terminal th:first-child, .terminal td:first-child { text-align: left; }
.terminal td:first-child svg { width: 7px; height: 8px; margin-right: 1px; vertical-align: -2px; }
svg.b { color: #2f86d8; } svg.s { color: #e03a24; } svg.ok { color: #2aa33a; }
.terminal tbody tr:nth-child(2) { background: #ececec; }
.terminal tbody td button { width: 7px; color: #888; }
.terminal tfoot { background: #c6c6c6; }
.terminal tfoot td { font-weight: 700; border: 0; color: #222; }
.terminal tfoot td:last-child { padding-right: 11px; }
em { color: #999; }
.k59 { width: 59px; } .k82 { width: 82px; } .k43 { width: 43px; } .k32 { width: 32px; } .k42 { width: 42px; } .k46 { width: 46px; }
.terminal sub { color: #f33; font-size: 4px; font-weight: 700; line-height: 4px; }
.terminal .tabs button { padding: 0 4px; }
.terminal .tabs .active { padding: 0 5px; }

.taskbar { position: relative; display: flex; align-items: stretch; justify-content: space-between; height: 15px; padding-left: 22px; background: #3a3a3c; color: #fff; }
.apps { display: grid; grid-template-columns: repeat(13, 1fr); width: 307px; }
.taskbar button { height: 15px; display: flex; justify-content: center; padding-top: 3px; }
.taskbar svg { width: 12px; height: 12px; }
.taskbar .current { background: #5c5c5e; border-bottom: 1px solid #8ac; }
.taskbar time { width: 14px; white-space: nowrap; line-height: 8px; font-size: 5px; }
.taskbar .notice { position: absolute; left: 0; bottom: 0; width: 22px; height: 19px; background: #303032; }
.notice svg { width: 13px; }
.notice span { position: absolute; left: 11px; top: 7px; font-size: 5px; }
```
